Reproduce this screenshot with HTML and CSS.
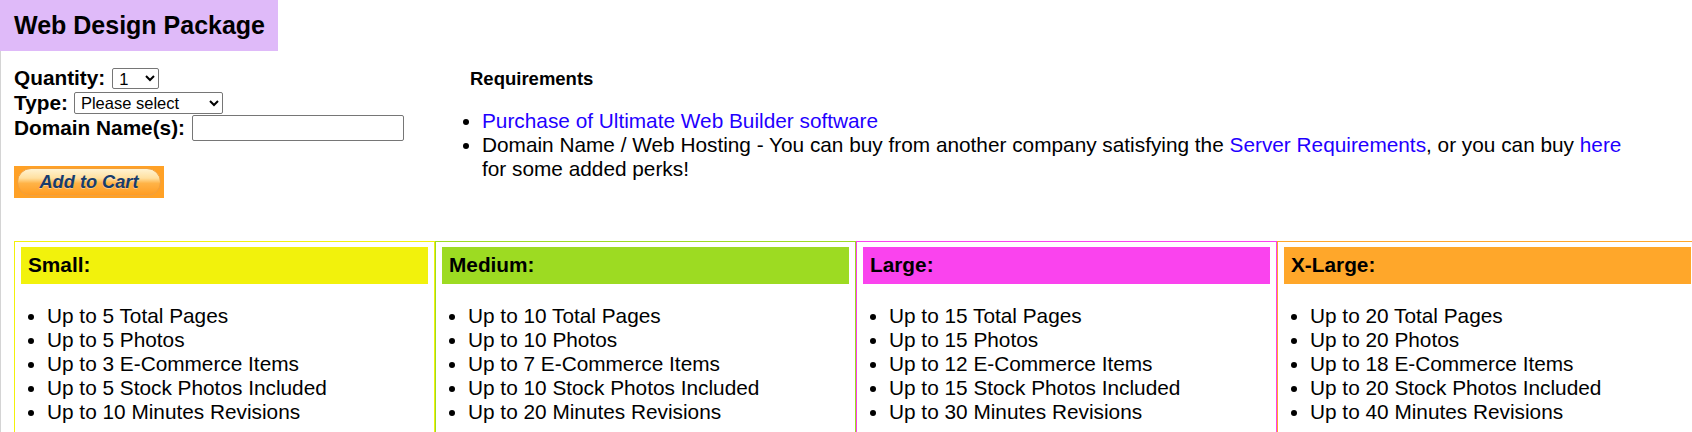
FILE: index.html
```html
<!DOCTYPE html>
<html lang="en">
<head>
    <meta charset="UTF-8">
    <meta name="viewport" content="width=device-width, initial-scale=1.0">
    <title>Web Design Package</title>
    <link rel="stylesheet" href="styles.css">
</head>
<body>
    <h3 class="page-title">Web Design Package</h3>
    <div class="content">
        <div class="order">
            <form class="order-form">
                <div class="row row-qty">
                    <label for="qty">Quantity:</label>
                    <select id="qty" class="qty-select">
                        <option>1</option>
                        <option>2</option>
                        <option>3</option>
                    </select>
                </div>
                <div class="row row-type">
                    <label for="type">Type:</label>
                    <select id="type" class="type-select">
                        <option>Please select</option>
                        <option>Small</option>
                        <option>Medium</option>
                        <option>Large</option>
                        <option>X-Large</option>
                    </select>
                </div>
                <div class="row row-domain">
                    <label for="domain">Domain Name(s):</label>
                    <input id="domain" class="domain-input" type="text">
                </div>
                <button type="button" class="cart-btn"><span class="cart-pill">Add to Cart</span></button>
            </form>
            <div class="requirements">
                <h4>Requirements</h4>
                <ul>
                    <li><a href="#">Purchase of Ultimate Web Builder software</a></li>
                    <li>Domain Name / Web Hosting - You can buy from another company satisfying the <a href="#">Server Requirements</a>, or you can buy <a href="#">here</a> for some added perks!</li>
                </ul>
            </div>
        </div>

        <div class="tiers">
            <div class="tier small">
                <h4 class="tier-name">Small:</h4>
                <ul>
                    <li>Up to 5 Total Pages</li>
                    <li>Up to 5 Photos</li>
                    <li>Up to 3 E-Commerce Items</li>
                    <li>Up to 5 Stock Photos Included</li>
                    <li>Up to 10 Minutes Revisions</li>
                </ul>
            </div>
            <div class="tier medium">
                <h4 class="tier-name">Medium:</h4>
                <ul>
                    <li>Up to 10 Total Pages</li>
                    <li>Up to 10 Photos</li>
                    <li>Up to 7 E-Commerce Items</li>
                    <li>Up to 10 Stock Photos Included</li>
                    <li>Up to 20 Minutes Revisions</li>
                </ul>
            </div>
            <div class="tier large">
                <h4 class="tier-name">Large:</h4>
                <ul>
                    <li>Up to 15 Total Pages</li>
                    <li>Up to 15 Photos</li>
                    <li>Up to 12 E-Commerce Items</li>
                    <li>Up to 15 Stock Photos Included</li>
                    <li>Up to 30 Minutes Revisions</li>
                </ul>
            </div>
            <div class="tier xlarge">
                <h4 class="tier-name">X-Large:</h4>
                <ul>
                    <li>Up to 20 Total Pages</li>
                    <li>Up to 20 Photos</li>
                    <li>Up to 18 E-Commerce Items</li>
                    <li>Up to 20 Stock Photos Included</li>
                    <li>Up to 40 Minutes Revisions</li>
                </ul>
            </div>
        </div>
    </div>
</body>
</html>
```

FILE: styles.css
```css
body {
    margin: 0;
    font-family: "Liberation Sans", Arial, sans-serif;
    font-size: 20.8px;
    color: black;
    background: white;
    overflow-x: hidden;
}
a {
    color: #1f00ff;
    text-decoration: none;
}
.page-title {
    display: inline-block;
    margin: 0;
    padding: 11px 13px 11px 14px;
    font-size: 25px;
    line-height: 29px;
    background: #dfbaf9;
}
.content {
    border-left: 1px solid #d4d4d4;
    padding-left: 13px;
    padding-bottom: 40px;
}
.order {
    display: flex;
    align-items: flex-start;
    padding-top: 15px;
}
.order-form {
    width: 429px;
    flex-shrink: 0;
}
.row {
    display: flex;
    align-items: center;
    gap: 6px;
    font-weight: bold;
}
.row-qty { height: 24px; }
.row-qty label { margin-right: 1px; }
.row-type { height: 25px; gap: 6px; }
.row-domain { height: 26px; gap: 7px; }
.qty-select,
.type-select {
    font-family: "Liberation Sans", Arial, sans-serif;
    font-size: 16.5px;
    height: 21px;
    padding: 0 0 0 2px;
    border: 1px solid #767676;
    border-radius: 2px;
    background: white;
    color: black;
}
.qty-select { width: 47px; }
.type-select { width: 149px; height: 22px; }
.domain-input {
    width: 212px;
    height: 26px;
    box-sizing: border-box;
    border: 1px solid #767676;
    border-radius: 2px;
    padding: 0 4px;
    font-size: 16.5px;
}
.cart-btn {
    display: block;
    margin-top: 25px;
    width: 150px;
    height: 32px;
    padding: 2px 3px;
    border: none;
    background: #ffa126;
    cursor: pointer;
}
.cart-pill {
    display: block;
    height: 100%;
    box-sizing: border-box;
    border: 1px solid #f0a040;
    border-radius: 14px;
    background: linear-gradient(#fff3d2 0%, #ffe0a0 35%, #ffb347 55%, #ff9c22 100%);
    font-family: "Liberation Sans", Arial, sans-serif;
    font-size: 18.2px;
    font-weight: bold;
    font-style: italic;
    line-height: 26px;
    color: #173c6c;
    text-shadow: 0 1px 0 rgba(255, 255, 255, 0.4);
}
.requirements {
    width: 1207px;
    flex-shrink: 0;
}
.requirements h4 {
    margin: 2px 0 0 27px;
    font-size: 18.5px;
    line-height: 21px;
}
.requirements ul {
    margin: 20px 0 0;
    padding-left: 39px;
}
.tiers {
    display: flex;
    margin-top: 43px;
    overflow: hidden;
}
.tier {
    width: 421px;
    flex-shrink: 0;
    box-sizing: border-box;
    border: 1px solid;
    padding: 5px 6px 20px;
}
.tier-name {
    margin: 0;
    padding: 6px 7px 7px;
    font-size: 20.8px;
    line-height: 24px;
}
.tier ul {
    margin: 20px 0 0;
    padding-left: 26px;
}
.small { border-color: #f2f20c; }
.small .tier-name { background: #f2f20c; }
.medium { border-color: #9ddb22; }
.medium .tier-name { background: #9ddb22; }
.large { border-color: #fa43ee; }
.large .tier-name { background: #fa43ee; }
.xlarge { border-color: #ffa72a; }
.xlarge .tier-name { background: #ffa72a; }
```
